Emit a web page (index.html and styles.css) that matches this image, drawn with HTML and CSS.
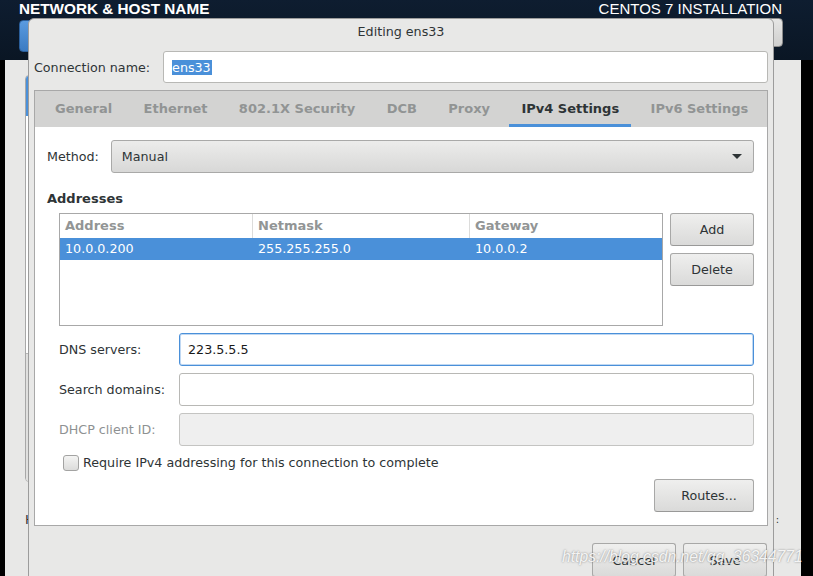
FILE: index.html
```html
<!DOCTYPE html>
<html lang="en">
<head>
<meta charset="utf-8">
<title>Editing ens33</title>
<link rel="stylesheet" href="styles.css">
</head>
<body>
<div class="screen">
  <header class="topbar">
    <div class="titles">
      <span class="spoke-title">NETWORK &amp; HOST NAME</span>
      <span class="product">CENTOS 7 INSTALLATION</span>
    </div>
    <div class="toolbar">
      <span class="btn-done"></span>
      <span class="btn-help"></span>
    </div>
  </header>
  <div class="body-row">
    <div class="edge-left"></div>
    <main class="hub">
      <div class="device-list">
        <div class="device-sel"></div>
        <div class="device-rest"></div>
        <div class="device-tools"></div>
      </div>
      <div class="stray-row"><span>H</span><span class="dots">:</span></div>
    </main>
    <div class="edge-right"></div>
  </div>

  <section class="dialog">
    <div class="dialog-title">Editing ens33</div>
    <div class="conn-row">
      <span class="label">Connection name:</span>
      <div class="entry"><span class="selected-text">ens33</span></div>
    </div>
    <div class="notebook">
      <nav class="tabs">
        <span class="tab">General</span>
        <span class="tab">Ethernet</span>
        <span class="tab">802.1X Security</span>
        <span class="tab">DCB</span>
        <span class="tab">Proxy</span>
        <span class="tab active">IPv4 Settings</span>
        <span class="tab">IPv6 Settings</span>
      </nav>
      <div class="page">
        <div class="method-row">
          <span class="label">Method:</span>
          <div class="combo"><span>Manual</span><span class="arrow"></span></div>
        </div>
        <div class="section-head">Addresses</div>
        <div class="addr-row">
          <div class="table">
            <div class="trow thead">
              <span class="cell">Address</span>
              <span class="cell sep">Netmask</span>
              <span class="cell sep">Gateway</span>
            </div>
            <div class="trow tsel">
              <span class="cell">10.0.0.200</span>
              <span class="cell sepd">255.255.255.0</span>
              <span class="cell sepd">10.0.0.2</span>
            </div>
          </div>
          <div class="addr-buttons">
            <span class="button">Add</span>
            <span class="button">Delete</span>
          </div>
        </div>
        <div class="form-grid">
          <span class="label">DNS servers:</span>
          <div class="entry focused"><span class="value">223.5.5.5</span></div>
          <span class="label">Search domains:</span>
          <div class="entry"></div>
          <span class="label disabled">DHCP client ID:</span>
          <div class="entry insensitive"></div>
        </div>
        <label class="check-row">
          <span class="checkbox"></span>
          <span>Require IPv4 addressing for this connection to complete</span>
        </label>
        <div class="routes-row"><span class="button routes">Routes...</span></div>
      </div>
    </div>
    <div class="actions">
      <span class="button action">Cancel</span>
      <span class="button action">Save</span>
    </div>
  </section>

  <div class="watermark">https://blog.csdn.net/qq_36344771</div>
</div>
</body>
</html>
```
FILE: styles.css
```css
* { box-sizing: border-box; }
html, body { margin: 0; padding: 0; }
body {
  background: #000;
  font-family: "DejaVu Sans", "Noto Sans", sans-serif;
  font-size: 12.7px;
  color: #2e3436;
}
.screen {
  position: relative;
  width: 813px;
  height: 576px;
  overflow: hidden;
  background: #000;
}

/* top bar */
.topbar {
  height: 60px;
  background: linear-gradient(#0e1d30, #0a1624);
  color: #fff;
  font-family: "Liberation Sans", Arial, sans-serif;
  font-size: 15px;
}
.titles {
  display: flex;
  justify-content: space-between;
  padding: 0 31px 0 19px;
  height: 18px;
  line-height: 18px;
}
.spoke-title { font-weight: bold; font-size: 15.3px; }
.toolbar {
  display: flex;
  justify-content: space-between;
  align-items: flex-start;
  padding: 0 30px 0 19px;
}
.btn-done {
  width: 80px;
  height: 32px;
  margin-top: 2px;
  border-radius: 4px;
  background: linear-gradient(#5a9be0, #3b7bc2);
  border: 1px solid #2a5e9a;
}
.btn-help {
  width: 60px;
  height: 29px;
  border-radius: 4px;
  background: linear-gradient(#e6e6e5, #cfcfce);
  border: 1px solid #8a8a8a;
}

/* background hub */
.body-row {
  display: flex;
  height: 516px;
}
.edge-left { width: 5px; background: #000; }
.edge-right { width: 12px; background: #000; }
.hub {
  flex: 1;
  background: #e8e8e7;
  padding: 15px 0 0 20px;
}
.device-list {
  width: 300px;
  height: 407px;
  border: 1px solid #a8a8a8;
  border-radius: 4px;
  display: flex;
  flex-direction: column;
  overflow: hidden;
  background: #fff;
}
.device-sel { height: 40px; background: #4a90d9; }
.device-rest { height: 237px; background: #fff; }
.device-tools { flex: 1; background: #e0e0df; border-top: 1px solid #b8b8b8; }
.stray-row {
  display: flex;
  justify-content: space-between;
  margin-top: 30px;
  padding-right: 22px;
  line-height: 16px;
  color: #2e3436;
}
.stray-row .dots { font-size: 10px; }

/* dialog */
.dialog {
  position: absolute;
  left: 28px;
  top: 18px;
  width: 746px;
  height: 600px;
  background: #e8e8e7;
  border: 1px solid #9c9c9c;
  border-radius: 6px 6px 0 0;
  padding: 0 5px;
  display: flex;
  flex-direction: column;
}
.dialog-title {
  height: 26px;
  line-height: 26px;
  text-align: center;
}
.conn-row {
  display: flex;
  align-items: center;
  gap: 13px;
  margin-top: 6px;
}
.entry {
  flex: 1;
  height: 32px;
  background: #fff;
  border: 1px solid #b8b8b5;
  border-radius: 3px;
  padding-left: 8px;
  display: flex;
  align-items: center;
}
.conn-row .entry { height: 32px; }
.selected-text {
  background: #4a90d9;
  color: #fff;
  line-height: 15px;
  padding-right: 1px;
}

/* notebook */
.notebook {
  margin-top: 7px;
  border: 1px solid #a8a8a8;
  display: flex;
  flex-direction: column;
}
.tabs {
  display: flex;
  gap: 7.4px;
  padding-left: 8px;
  height: 36px;
  background: #d3d3d2;
}
.tab {
  padding: 0 12px;
  line-height: 36px;
  font-size: 13px;
  font-weight: bold;
  color: #919494;
}
.tab.active {
  color: #2e3436;
  box-shadow: inset 0 -3px 0 #4a90d9;
}
.page {
  background: #fff;
  padding: 13px 13px 13px 12px;
  display: flex;
  flex-direction: column;
}
.method-row {
  display: flex;
  align-items: center;
  gap: 12px;
}
.combo {
  flex: 1;
  height: 33px;
  border: 1px solid #a9a9a8;
  border-radius: 3px;
  background: linear-gradient(#ececeb, #d8d8d7);
  display: flex;
  align-items: center;
  justify-content: space-between;
  padding: 0 11px 0 10px;
}
.arrow {
  width: 0;
  height: 0;
  border-left: 5px solid transparent;
  border-right: 5px solid transparent;
  border-top: 5px solid #2e3436;
}
.section-head {
  margin-top: 18px;
  line-height: 16px;
  font-size: 13px;
  font-weight: bold;
}
.addr-row {
  display: flex;
  gap: 7px;
  margin-top: 6px;
  padding-left: 12px;
}
.table {
  flex: 1;
  height: 113px;
  border: 1px solid #a8a8a8;
  background: #fff;
}
.trow {
  display: grid;
  grid-template-columns: 192px 217px 1fr;
}
.thead { height: 24px; }
.thead .cell {
  line-height: 24px;
  font-size: 13px;
  font-weight: bold;
  color: #929595;
}
.cell { padding-left: 5px; white-space: nowrap; }
.sep { border-left: 1px solid #dcdcdb; }
.sepd { border-left: 1px solid transparent; }
.tsel {
  height: 22px;
  background: #4a90d9;
  color: #fff;
}
.tsel .cell { line-height: 22px; }
.addr-buttons {
  width: 84px;
  display: flex;
  flex-direction: column;
  gap: 7px;
}
.button {
  display: flex;
  align-items: center;
  justify-content: center;
  height: 33px;
  border: 1px solid #a8a8a7;
  border-bottom-color: #999998;
  border-radius: 3px;
  background: linear-gradient(#efefee, #dadad9);
  color: #2e3436;
}
.form-grid {
  display: grid;
  grid-template-columns: 120px 1fr;
  grid-auto-rows: 33px;
  row-gap: 7px;
  margin-top: 7px;
  padding-left: 12px;
  align-items: center;
}
.form-grid .entry { height: 33px; }
.entry.focused {
  border-color: #4a90d9;
  box-shadow: inset 0 0 0 1px rgba(74, 144, 217, 0.35);
}
.value { color: #1a1a1a; }
.label.disabled { color: #8e9192; }
.entry.insensitive {
  background: #efefef;
  border-color: #c4c4c2;
}
.check-row {
  display: flex;
  align-items: center;
  gap: 4px;
  margin-top: 9px;
  padding-left: 16px;
  line-height: 16px;
}
.checkbox {
  width: 16px;
  height: 16px;
  border: 1px solid #a3a3a2;
  border-radius: 3px;
  background: linear-gradient(#f4f4f3, #dcdcdb);
}
.routes-row {
  display: flex;
  justify-content: flex-end;
  margin-top: 8px;
}
.routes { width: 100px; padding-left: 10px; }
.actions {
  display: flex;
  justify-content: flex-end;
  gap: 7px;
  margin-top: 17px;
  padding-right: 1px;
}
.action { width: 84px; height: 34px; }

.watermark {
  position: absolute;
  left: 562px;
  top: 547px;
  font-family: "Liberation Sans", Arial, sans-serif;
  font-size: 15.7px;
  font-style: italic;
  line-height: 20px;
  color: rgba(255, 255, 255, 0.88);
  text-shadow: 0 0 2px rgba(60, 60, 60, 0.6);
  white-space: nowrap;
}
```
